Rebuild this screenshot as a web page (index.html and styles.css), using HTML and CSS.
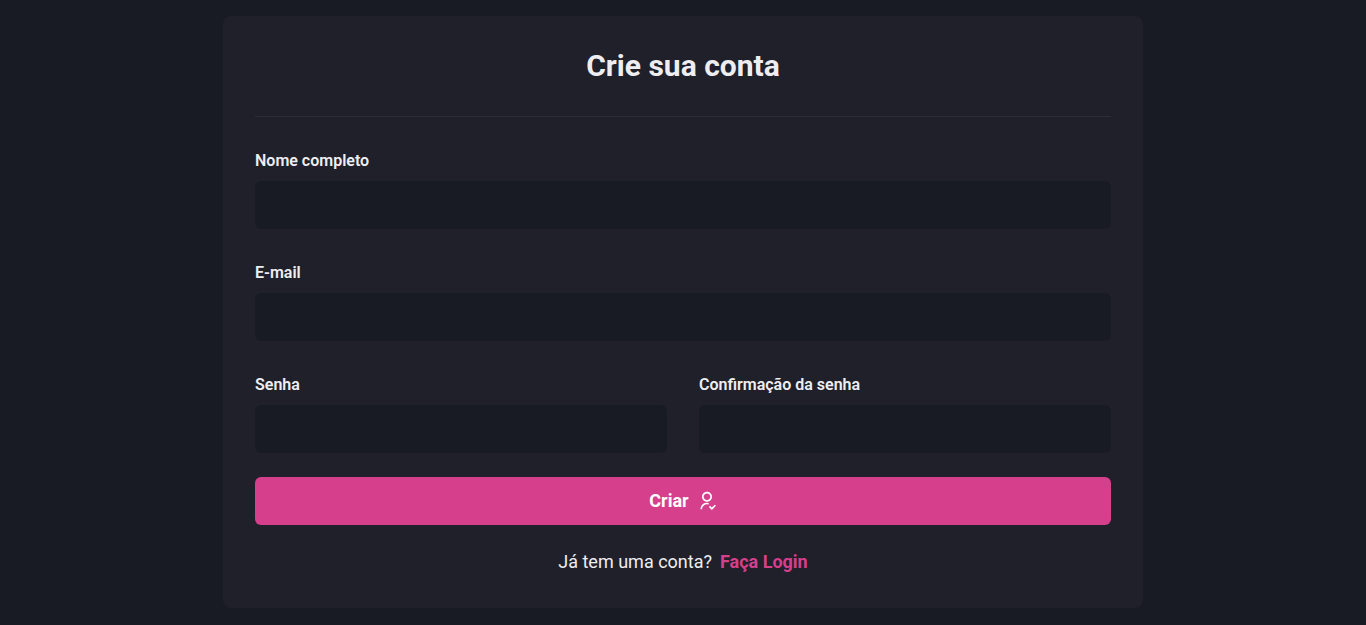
FILE: index.html
```html
<!DOCTYPE html>
<html lang="pt-BR">
<head>
<meta charset="utf-8">
<meta name="viewport" content="width=device-width, initial-scale=1">
<title>Crie sua conta</title>
<link rel="stylesheet" href="styles.css">
</head>
<body>
<main class="card">
  <h1 class="title">Crie sua conta</h1>
  <form class="form">
    <div class="field">
      <label for="name">Nome completo</label>
      <input id="name" name="name" type="text">
    </div>
    <div class="field">
      <label for="email">E-mail</label>
      <input id="email" name="email" type="email">
    </div>
    <div class="row">
      <div class="field">
        <label for="password">Senha</label>
        <input id="password" name="password" type="password">
      </div>
      <div class="field">
        <label for="confirm">Confirmação da senha</label>
        <input id="confirm" name="confirm" type="password">
      </div>
    </div>
    <button class="submit" type="submit">
      Criar
      <svg class="icon" viewBox="0 0 24 24" fill="currentColor" aria-hidden="true">
        <path d="M14 14.252v2.090A6 6 0 0 0 6 22l-2-.001a8 8 0 0 1 10-7.748zM12 13c-3.315 0-6-2.685-6-6s2.685-6 6-6 6 2.685 6 6-2.685 6-6 6zm0-2c2.210 0 4-1.790 4-4s-1.790-4-4-4-4 1.790-4 4 1.790 4 4 4zm5.793 8.914l3.535-3.535 1.415 1.414-4.950 4.950-3.536-3.536 1.415-1.414 2.120 2.121z"/>
      </svg>
    </button>
  </form>
  <p class="login">Já tem uma conta? <a href="#login">Faça Login</a></p>
</main>
</body>
</html>
```
FILE: styles.css
```css
* {
  box-sizing: border-box;
}

body {
  margin: 0;
  padding: 16px;
  background: #181b23;
  color: #eeeef2;
  font-family: Roboto, sans-serif;
}

.card {
  max-width: 920px;
  margin: 0 auto;
  padding: 32px;
  border-radius: 8px;
  background: #1f2029;
}

.title {
  margin: 0 0 32px;
  padding-bottom: 32px;
  border-bottom: 1px solid #2a2c38;
  font-size: 30px;
  line-height: 36px;
  text-align: center;
}

.form {
  display: flex;
  flex-direction: column;
  gap: 32px;
}

.field {
  display: flex;
  flex: 1;
  flex-direction: column;
  gap: 8px;
}

.field label {
  font-size: 16px;
  font-weight: 600;
  line-height: 24px;
}

.field input {
  width: 100%;
  height: 48px;
  padding: 0 16px;
  border: 0;
  border-radius: 6px;
  background: #181b23;
  color: inherit;
  font: inherit;
}

.row {
  display: flex;
  gap: 32px;
}

.submit {
  display: flex;
  align-items: center;
  justify-content: center;
  gap: 8px;
  height: 48px;
  margin-top: -8px;
  border: 0;
  border-radius: 6px;
  background: #d53f8c;
  color: #ffffff;
  font: 700 18px/22px Roboto, sans-serif;
  cursor: pointer;
}

.icon {
  width: 20px;
  height: 20px;
}

.login {
  display: flex;
  justify-content: center;
  gap: 8px;
  margin: 24px 0 2px;
  font-size: 18px;
  line-height: 25px;
}

.login a {
  color: #d53f8c;
  font-weight: 700;
  text-decoration: none;
}
```
